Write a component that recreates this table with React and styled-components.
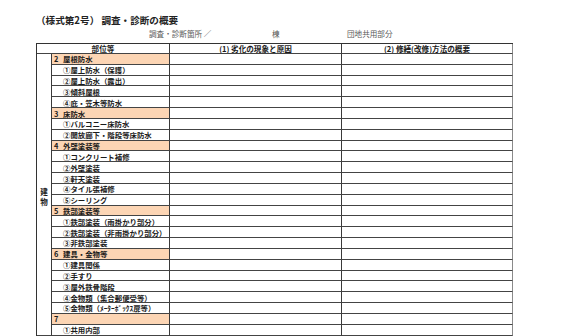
import React from "react";
import styled, { createGlobalStyle } from "styled-components";

const GlobalStyle = createGlobalStyle`
  html, body { margin: 0; padding: 0; background: #ffffff; }
  body { font-family: "Noto Sans CJK JP", "Noto Sans", sans-serif; color: #1e1e1e; }
`;

const Page = styled.div`
  padding: 13px 0 0 36px;
  width: 567px;
  height: 336px;
  box-sizing: border-box;
  overflow: hidden;
`;

const Title = styled.div`
  font-size: 9.6px;
  font-weight: 700;
  line-height: 14px;
  height: 14px;
  color: #222;
`;

const Location = styled.div`
  display: grid;
  grid-template-columns: 123px 75px auto;
  margin-left: 113px;
  font-size: 7.6px;
  line-height: 14px;
  height: 16px;
  color: #5a5a5a;
`;

const Grid = styled.div`
  display: grid;
  grid-template-columns: 15px 118px 172px 171px;
  grid-template-rows: 10px repeat(26, 10.84px);
  border-top: 1px solid #333;
  border-left: 1px solid #333;
  width: max-content;
`;

const Cell = styled.div`
  box-sizing: border-box;
  border-right: 1px solid ${(p) => (p.$edge ? "#8a8a8a" : "#3a3a3a")};
  border-bottom: 1px solid #444;
  background: ${(p) => (p.$orange ? "#fcd5b4" : "#fff")};
  font-size: 7.4px;
  line-height: 9px;
  white-space: nowrap;
  overflow: hidden;
  display: flex;
  align-items: center;
  color: #1a1a1a;
`;

const HeadCell = styled(Cell)`
  grid-column: ${(p) => p.$span || "auto"};
  justify-content: center;
  font-weight: 700;
  font-size: 7.6px;
`;

const SideCell = styled(Cell)`
  grid-column: 1;
  grid-row: 2 / span 26;
  flex-direction: column;
  justify-content: center;
  font-size: 7.6px;
  line-height: 10px;
  font-weight: 700;
  padding-top: 5px;
`;

const ItemCell = styled(Cell)`
  grid-column: 2;
  padding-left: ${(p) => (p.$orange ? "2px" : "11px")};
  font-weight: 700;
`;

const Num = styled.span`
  display: inline-block;
  width: 9px;
`;

const rows = [
  { n: "2", t: "屋根防水" },
  { t: "①屋上防水（保護）" },
  { t: "②屋上防水（露出）" },
  { t: "③傾斜屋根" },
  { t: "④庇・笠木等防水" },
  { n: "3", t: "床防水" },
  { t: "①バルコニー床防水" },
  { t: "②開放廊下・階段等床防水" },
  { n: "4", t: "外壁塗装等" },
  { t: "①コンクリート補修" },
  { t: "②外壁塗装" },
  { t: "③軒天塗装" },
  { t: "④タイル張補修" },
  { t: "⑤シーリング" },
  { n: "5", t: "鉄部塗装等" },
  { t: "①鉄部塗装（雨掛かり部分）" },
  { t: "②鉄部塗装（非雨掛かり部分）" },
  { t: "③非鉄部塗装" },
  { n: "6", t: "建具・金物等" },
  { t: "①建具関係" },
  { t: "②手すり" },
  { t: "③屋外鉄骨階段" },
  { t: "④金物類（集合郵便受等）" },
  { t: "⑤金物類（ﾒｰﾀｰﾎﾞｯｸｽ扉等）" },
  { n: "7", t: "" },
  { t: "①共用内部" },
];

export default function App() {
  return (
    <>
      <GlobalStyle />
      <Page>
        <Title>（様式第2号） 調査・診断の概要</Title>
        <Location>
          <span>調査・診断箇所 ／</span>
          <span>棟</span>
          <span>団地共用部分</span>
        </Location>
        <Grid>
          <HeadCell $span="1 / span 2">部位等</HeadCell>
          <HeadCell>(1) 劣化の現象と原因</HeadCell>
          <HeadCell $edge>(2) 修繕(改修)方法の概要</HeadCell>
          <SideCell>
            <span>建</span>
            <span>物</span>
          </SideCell>
          {rows.map((r, i) => (
            <React.Fragment key={i}>
              <ItemCell $orange={!!r.n}>
                {r.n && <Num>{r.n}</Num>}
                {r.t}
              </ItemCell>
              <Cell />
              <Cell $edge />
            </React.Fragment>
          ))}
        </Grid>
      </Page>
    </>
  );
}
